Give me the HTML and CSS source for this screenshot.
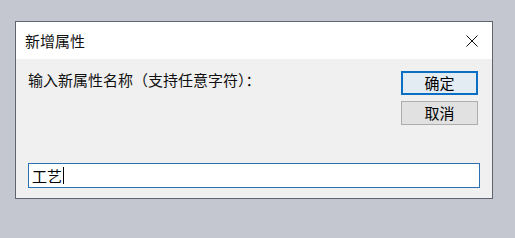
FILE: index.html
```html
<!DOCTYPE html>
<html lang="zh-CN">
<head>
<meta charset="UTF-8"/>
<meta name="viewport" content="width=device-width,initial-scale=1.0"/>
<title>新增属性</title>
<link rel="stylesheet" href="styles.css">
</head>
<body>

<div class="dialog">
  <div class="titlebar">
    <span class="title">新增属性</span>
    <svg class="close" width="12" height="12" viewBox="0 0 12 12">
      <path d="M0.5 0.5 L11.5 11.5 M11.5 0.5 L0.5 11.5" stroke="#111" stroke-width="1" fill="none"/>
    </svg>
  </div>
  <div class="content">
    <div class="row">
      <div class="label">输入新属性名称（支持任意字符）：</div>
      <div class="buttons">
        <button class="btn btn-default">确定</button>
        <button class="btn">取消</button>
      </div>
    </div>
    <div class="field">工艺<span class="caret"></span></div>
  </div>
</div>

</body>
</html>
```

FILE: styles.css
```css
body { margin:0; padding:21px 0 0 15px; background:#c4c7d0; font-family:"Noto Sans CJK SC","Microsoft YaHei",sans-serif; color:#000; }
.dialog { width:478px; height:178px; box-sizing:border-box; border:1px solid #5f6570; display:flex; flex-direction:column; }
.titlebar { height:37px; background:#fff; display:flex; align-items:center; justify-content:space-between; padding:0 14px 0 9px; flex:none; }
.title { font-size:15px; color:#111; }
.close { display:block; }
.content { flex:1; background:#f0f0f0; padding:12px 12px 10px 12px; display:flex; flex-direction:column; justify-content:space-between; }
.row { display:flex; justify-content:space-between; align-items:flex-start; padding-right:2px; }
.label { font-size:15px; line-height:20px; margin-top:-1px; color:#111; }
.buttons { display:flex; flex-direction:column; gap:6px; }
.btn { width:77px; height:24px; box-sizing:border-box; border:1px solid #adadad; background:#e1e1e1; font-family:inherit; font-size:15px; line-height:20px; padding:0; color:#000; }
.btn-default { border:2px solid #0a6fc2; background:#e3ebf3; line-height:18px; }
.field { height:25px; box-sizing:border-box; border:1px solid #2c6fb3; background:#fff; font-size:15px; line-height:22px; padding-left:3px; display:flex; align-items:center; }
.caret { display:inline-block; width:1px; height:17px; background:#000; margin-left:1px; }
```
